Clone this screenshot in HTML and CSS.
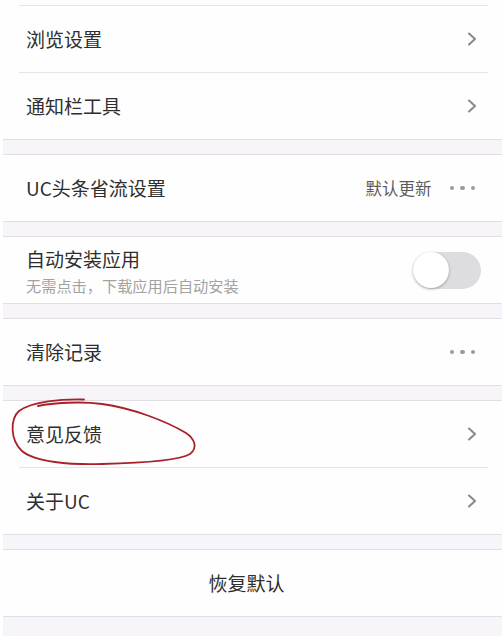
FILE: index.html
```html
<!DOCTYPE html>
<html lang="zh-CN">
<head>
<meta charset="utf-8">
<title>设置</title>
<link rel="stylesheet" href="styles.css">
</head>
<body>
<div class="page">
  <section class="group first">
    <div class="cut"></div>
    <div class="row">
      <span class="title">浏览设置</span>
      <svg class="chev" viewBox="0 0 10 14" width="10" height="14"><path d="M2 1.5 L8 7 L2 12.5" /></svg>
    </div>
    <div class="row">
      <span class="title">通知栏工具</span>
      <svg class="chev" viewBox="0 0 10 14" width="10" height="14"><path d="M2 1.5 L8 7 L2 12.5" /></svg>
    </div>
  </section>

  <section class="group">
    <div class="row">
      <span class="title">UC头条省流设置</span>
      <span class="value">默认更新</span>
      <span class="dots"><i></i><i></i><i></i></span>
    </div>
  </section>

  <section class="group">
    <div class="row">
      <div class="textblock">
        <span class="title">自动安装应用</span>
        <span class="sub">无需点击，下载应用后自动安装</span>
      </div>
      <span class="toggle"><span class="knob"></span></span>
    </div>
  </section>

  <section class="group">
    <div class="row">
      <span class="title">清除记录</span>
      <span class="dots"><i></i><i></i><i></i></span>
    </div>
  </section>

  <section class="group">
    <div class="row">
      <span class="title">意见反馈</span>
      <svg class="chev" viewBox="0 0 10 14" width="10" height="14"><path d="M2 1.5 L8 7 L2 12.5" /></svg>
    </div>
    <div class="row">
      <span class="title">关于UC</span>
      <svg class="chev" viewBox="0 0 10 14" width="10" height="14"><path d="M2 1.5 L8 7 L2 12.5" /></svg>
    </div>
  </section>

  <section class="group">
    <div class="row center">
      <span class="title">恢复默认</span>
    </div>
  </section>

  <svg class="mark" viewBox="0 0 502 636" width="502" height="636">
    <path d="M84 399.5 C62 399 32 401 19 411 C10 419 10 440 22 451 C35 462 70 465 102 464 C142 463 178 461 190 454 C198 448 195 439 186 433 C166 421 132 408 102 404 C80 401 52 403 38 406" />
  </svg>
</div>
</body>
</html>
```

FILE: styles.css
```css
html, body {
  margin: 0;
  padding: 0;
  background: #ffffff;
}

.page {
  position: relative;
  width: 499px;
  height: 636px;
  margin-left: 3px;
  background: #f7f5f9;
  font-family: "Noto Sans CJK SC", "Noto Sans", sans-serif;
  color: #2e2e2e;
  overflow: hidden;
}

.group {
  background: #fefefe;
  border-top: 1px solid #e1dfe4;
  border-bottom: 1px solid #e1dfe4;
  margin-bottom: 14px;
}

.group.first {
  border-top: none;
}

.cut {
  height: 5px;
}

.row {
  display: flex;
  align-items: center;
  height: 66px;
  padding: 0 25px 0 23px;
  position: relative;
}

.row::before {
  content: "";
  position: absolute;
  left: 16px;
  right: 14px;
  top: -1px;
  height: 1px;
  background: #e6e4e8;
}

.group > .row:first-child::before {
  display: none;
}

.row + .row,
.cut + .row {
  border-top: 1px solid transparent;
}

.title {
  font-size: 19px;
  line-height: 26px;
  padding-top: 0;
  flex: 1;
  white-space: nowrap;
}

.value {
  font-size: 16.5px;
  color: #5e5e5e;
  padding-top: 0;
  margin-right: 18px;
}

.dots {
  display: flex;
  gap: 6px;
  margin-right: 2px;
}

.dots i {
  display: block;
  width: 4.5px;
  height: 4.5px;
  border-radius: 50%;
  background: #9b9b9b;
}

.chev {
  display: block;
  margin-right: 0;
}

.chev path {
  fill: none;
  stroke: #8a8a8a;
  stroke-width: 2.1;
  stroke-linecap: round;
  stroke-linejoin: round;
}

.textblock {
  flex: 1;
  display: flex;
  flex-direction: column;
  padding-top: 2px;
}

.textblock .title {
  padding-top: 0;
}

.sub {
  font-size: 15.2px;
  line-height: 22px;
  margin-top: 2px;
  color: #a2a2a2;
  white-space: nowrap;
}

.toggle {
  position: relative;
  display: block;
  width: 68px;
  height: 37px;
  border-radius: 19px;
  background: #dddcdf;
  margin-right: -4px;
}

.knob {
  position: absolute;
  left: 0;
  top: 0.5px;
  width: 36px;
  height: 36px;
  border-radius: 50%;
  background: #ffffff;
  box-shadow: 0 1px 3px rgba(0, 0, 0, 0.3);
}

.row.center {
  justify-content: center;
  padding-right: 35px;
}

.row.center .title {
  flex: none;
}

.mark {
  position: absolute;
  left: -3px;
  top: 0;
  pointer-events: none;
}

.mark path {
  fill: none;
  stroke: #a8222b;
  stroke-width: 1.8;
  stroke-linecap: round;
}
```
